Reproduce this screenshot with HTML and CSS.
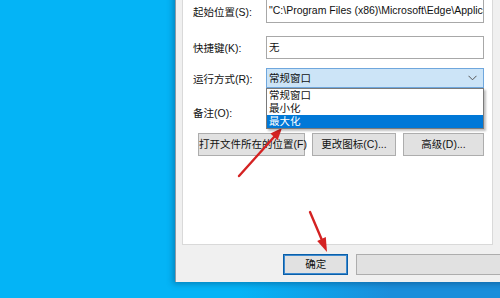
FILE: index.html
```html
<!DOCTYPE html>
<html>
<head>
	<title>属性</title>
	<link rel="stylesheet" href="styles.css">
</head>
<body>
	<div class="desktop">
		<div class="dialog">
			<div class="tabpanel">
				<div class="row row-target">
					<span class="label">起始位置(S):</span>
					<div class="field">"C:\Program Files (x86)\Microsoft\Edge\Application"</div>
				</div>
				<div class="row row-hotkey">
					<span class="label">快捷键(K):</span>
					<div class="field">无</div>
				</div>
				<div class="row row-run">
					<span class="label">运行方式(R):</span>
					<div class="combo">
						<span>常规窗口</span>
						<svg class="chevron" width="9" height="6" viewBox="0 0 9 6"><path d="M0.5 0.8 L4.5 4.8 L8.5 0.8" fill="none" stroke="#555" stroke-width="1"/></svg>
						<ul class="droplist">
							<li>常规窗口</li>
							<li>最小化</li>
							<li class="selected">最大化</li>
						</ul>
					</div>
				</div>
				<div class="row row-comment">
					<span class="label">备注(O):</span>
					<div class="field"></div>
				</div>
				<div class="actions">
					<div class="btn btn-open">打开文件所在的位置(F)</div>
					<div class="btn btn-icon">更改图标(C)...</div>
					<div class="btn btn-adv">高级(D)...</div>
				</div>
			</div>
			<div class="footer">
				<div class="btn btn-ok">确定</div>
				<div class="btn btn-cancel"></div>
			</div>
		</div>
	</div>

	<!-- red guide arrows drawn over the screenshot -->
	<svg class="arrows" width="500" height="298" viewBox="0 0 500 298">
		<line x1="239" y1="176" x2="274.5" y2="136.5" stroke="#d42222" stroke-width="2.4" stroke-linecap="round"/>
		<polygon points="282,128 277.6,140.2 270.4,133.6" fill="#d42222"/>
		<line x1="310" y1="212" x2="321.5" y2="239" stroke="#d42222" stroke-width="2.4" stroke-linecap="round"/>
		<polygon points="327,252 325.8,237 317.2,241" fill="#d42222"/>
	</svg>
</body>
</html>
```

FILE: styles.css
```css
body {
	margin: 0;
	width: 500px;
	height: 298px;
	overflow: hidden;
	position: relative;
	background: linear-gradient(90deg, #04b4f6 0, #04b4f6 240px, #1a8edb 390px);
	font-family: "Liberation Sans", "Noto Sans CJK SC", sans-serif;
	font-size: 10.5px;
	color: #111;
}

.desktop {
	display: flex;
	height: 298px;
	padding-left: 175px;
	box-sizing: border-box;
}

.dialog {
	flex-shrink: 0;
	width: 340px;
	height: 302px;
	margin-top: -20px;
	box-sizing: border-box;
	padding-left: 6px;
	background: #f0f0f0;
	border-left: 1px solid #8c9aa6;
	box-shadow: -2px 2px 6px rgba(0, 40, 80, 0.35);
	display: flex;
	flex-direction: column;
}

.tabpanel {
	width: 311px;
	height: 265px;
	box-sizing: border-box;
	background: #fff;
	border: 1px solid #d9d9d9;
	border-top: none;
	padding: 19px 0 0 10px;
}

.row {
	display: flex;
	align-items: center;
}

.label {
	width: 73px;
	white-space: nowrap;
}

.field {
	width: 218px;
	height: 24px;
	box-sizing: border-box;
	border: 1px solid #a8a8a8;
	padding: 0 2px;
	line-height: 21px;
	white-space: nowrap;
	overflow: hidden;
}

.row-target {
	margin-bottom: 13px;
}

.row-hotkey {
	margin-bottom: 9px;
}

.row-hotkey .field {
	height: 23px;
}

.row-run {
	margin-bottom: 13px;
}

.row-comment {
	margin-bottom: 9px;
}

.row-comment .field {
	height: 23px;
}

.combo {
	position: relative;
	width: 218px;
	height: 20px;
	box-sizing: border-box;
	border: 1px solid #6fa7dd;
	background: #cce4f7;
	padding: 0 2px;
	line-height: 18px;
	display: flex;
	justify-content: space-between;
	align-items: center;
}

.chevron {
	margin-right: 4px;
}

.droplist {
	position: absolute;
	top: 19px;
	left: -1px;
	width: 218px;
	box-sizing: border-box;
	margin: 0;
	padding: 0;
	list-style: none;
	background: #fff;
	border: 1px solid #7a7a7a;
	box-shadow: 2px 2px 2px rgba(0, 0, 0, 0.25);
	z-index: 2;
}

.droplist li {
	height: 13px;
	line-height: 13px;
	padding-left: 2px;
	overflow: hidden;
}

.droplist .selected {
	background: #0078d7;
	color: #fff;
}

.actions {
	display: flex;
	gap: 7px;
	margin-left: 5px;
}

.btn {
	height: 23px;
	box-sizing: border-box;
	border: 1px solid #adadad;
	background: #e1e1e1;
	text-align: center;
	line-height: 21px;
	white-space: nowrap;
}

.btn-open {
	width: 107px;
}

.btn-icon {
	width: 84px;
}

.btn-adv {
	width: 81px;
}

.footer {
	display: flex;
	gap: 8px;
	padding: 9px 0 0 101px;
}

.btn-ok {
	width: 66px;
	height: 21px;
	line-height: 18px;
	border: 1px solid #0b5fa8;
	box-shadow: inset 0 0 0 1px #3c8ad0;
}

.btn-cancel {
	width: 160px;
	height: 21px;
}

.arrows {
	position: absolute;
	top: 0;
	left: 0;
	pointer-events: none;
}
```
